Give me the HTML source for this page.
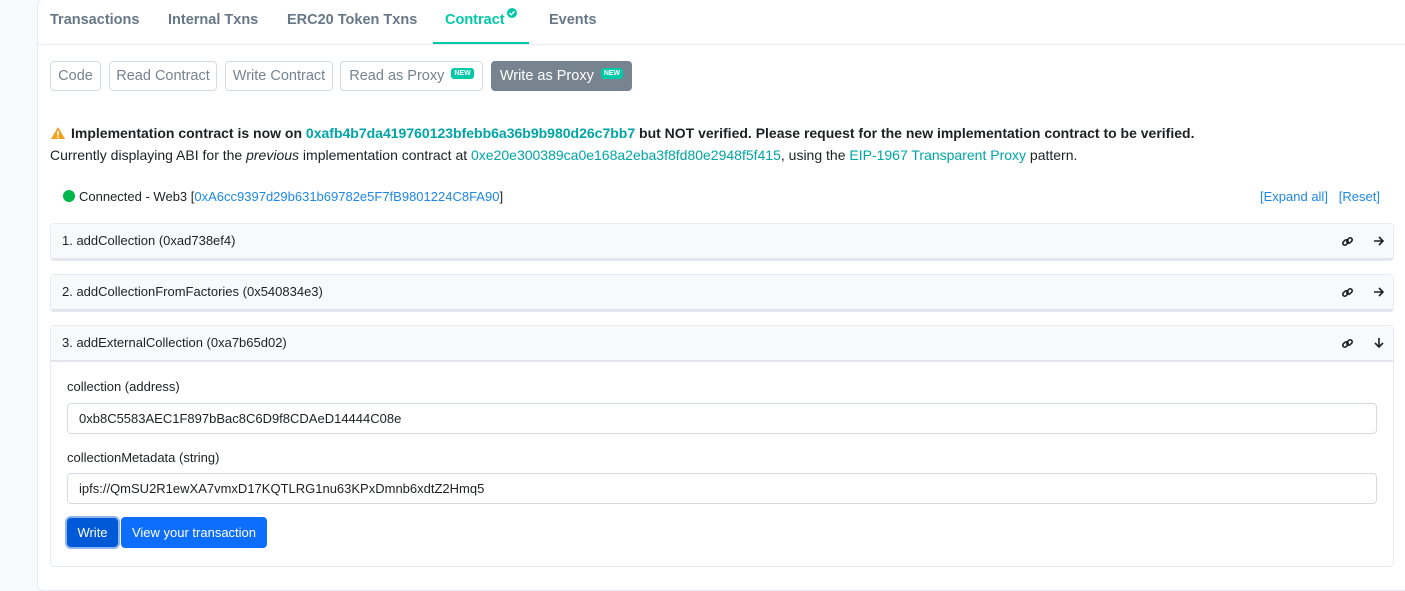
<!DOCTYPE html><html><head><style>
body{margin:0;width:1405px;height:571px;overflow:hidden;background:#f8f9fa;font-family:"Liberation Sans",sans-serif;font-size:14px;color:#1e2022}
.card{position:absolute;left:37px;top:-1px;width:1380px;height:590px;background:#fff;border:1px solid #e7eaf3;border-radius:6px}
.tabs{position:absolute;left:0;top:0;width:100%;height:44px;border-bottom:1px solid #e7eaf3}
.tab{position:absolute;top:12px;font-weight:bold;color:#677788;font-size:14.5px}
.btn{position:absolute;top:61px;height:30px;box-sizing:border-box;border:1px solid #d5dae2;border-radius:4px;color:#77838f;font-size:14.5px;line-height:28px;text-align:center;white-space:nowrap}
.new{display:inline-block;background:#00c9a7;color:#fff;font-size:7px;font-weight:bold;border-radius:3px;padding:1px 3px;vertical-align:5px;margin-left:7px;line-height:9px}
a{color:#00a5a5;text-decoration:none}
.blue{color:#1e88e5}
.acc{position:absolute;left:12px;width:1342px;border:1px solid #e7eaf3;border-radius:4px;background:#fff}
.hd{height:34px;background:#f8f9fa;border-bottom:2px solid #e2e5ec;font-size:13px;line-height:34px;padding-left:11px;color:#1e2022;position:relative}
.ic{position:absolute;top:11px}
.lbl{position:absolute;left:16px;font-size:13px}
.inp{position:absolute;left:16px;width:1310px;height:31px;box-sizing:border-box;border:1px solid #d5dae2;border-radius:4px;font-size:13px;line-height:29px;padding-left:11px;color:#1e2022}
</style></head><body>
<div class="card">
<div class="tabs">
<span class="tab" style="left:12px">Transactions</span>
<span class="tab" style="left:130px">Internal Txns</span>
<span class="tab" style="left:249px">ERC20 Token Txns</span>
<span class="tab" style="left:407px;color:#00c9a7">Contract<svg width="10" height="10" style="position:relative;top:-6px;left:2px"><circle cx="5" cy="5" r="5" fill="#00c9a7"/><path d="M2.5 5l1.7 1.7 3.3-3.3" stroke="#fff" stroke-width="1.4" fill="none"/></svg></span>
<span class="tab" style="left:511px">Events</span>
<div style="position:absolute;left:395px;top:42px;width:96px;height:2px;background:#00c9a7"></div>
</div>
<span class="btn" style="left:12px;width:51px">Code</span>
<span class="btn" style="left:71px;width:108px">Read Contract</span>
<span class="btn" style="left:187px;width:108px">Write Contract</span>
<span class="btn" style="left:302px;width:143px">Read as Proxy<span class="new">NEW</span></span>
<span class="btn" style="left:453px;width:141px;background:#77838f;border-color:#77838f;color:#fff">Write as Proxy<span class="new">NEW</span></span>
<div style="position:absolute;left:12px;top:125px;font-weight:bold;font-size:14px"><svg width="16" height="14" style="vertical-align:-2px;margin-right:5px"><path d="M8 1L15 13H1Z" fill="#f0a01c"/><rect x="7.2" y="5" width="1.6" height="4.5" fill="#fff"/><rect x="7.2" y="10.5" width="1.6" height="1.6" fill="#fff"/></svg>Implementation contract is now on <a>0xafb4b7da419760123bfebb6a36b9b980d26c7bb7</a> but NOT verified. Please request for the new implementation contract to be verified.</div>
<div style="position:absolute;left:12px;top:147px">Currently displaying ABI for the <i>previous</i> implementation contract at <a>0xe20e300389ca0e168a2eba3f8fd80e2948f5f415</a>, using the <a>EIP-1967 Transparent Proxy</a> pattern.</div>
<div style="position:absolute;left:25px;top:189px;font-size:13px"><span style="display:inline-block;width:12px;height:12px;border-radius:50%;background:#00b74a;vertical-align:-1px;margin-right:4px"></span>Connected - Web3 [<span class="blue">0xA6cc9397d29b631b69782e5F7fB9801224C8FA90</span>]</div>
<div style="position:absolute;left:1222px;top:189px;font-size:13px" class="blue">[Expand all] &nbsp; [Reset]</div>
<div class="acc" style="top:223px"><div class="hd">1. addCollection (0xad738ef4)<svg class="ic" style="left:1290px" width="13" height="13" viewBox="0 0 13 13"><g fill="none" stroke="#1e2022" stroke-width="1.6"><rect x="1.5" y="5.5" width="6" height="4" rx="2" transform="rotate(-45 4.5 7.5)"/><rect x="5.5" y="3.5" width="6" height="4" rx="2" transform="rotate(-45 8.5 5.5)"/></g></svg><svg class="ic" style="left:1322px" width="12" height="12" viewBox="0 0 12 12"><path d="M1 6h9M6 2l4 4-4 4" stroke="#1e2022" stroke-width="1.6" fill="none"/></svg></div></div>
<div class="acc" style="top:274px"><div class="hd">2. addCollectionFromFactories (0x540834e3)<svg class="ic" style="left:1290px" width="13" height="13" viewBox="0 0 13 13"><g fill="none" stroke="#1e2022" stroke-width="1.6"><rect x="1.5" y="5.5" width="6" height="4" rx="2" transform="rotate(-45 4.5 7.5)"/><rect x="5.5" y="3.5" width="6" height="4" rx="2" transform="rotate(-45 8.5 5.5)"/></g></svg><svg class="ic" style="left:1322px" width="12" height="12" viewBox="0 0 12 12"><path d="M1 6h9M6 2l4 4-4 4" stroke="#1e2022" stroke-width="1.6" fill="none"/></svg></div></div>
<div class="acc" style="top:325px;height:240px"><div class="hd">3. addExternalCollection (0xa7b65d02)<svg class="ic" style="left:1290px" width="13" height="13" viewBox="0 0 13 13"><g fill="none" stroke="#1e2022" stroke-width="1.6"><rect x="1.5" y="5.5" width="6" height="4" rx="2" transform="rotate(-45 4.5 7.5)"/><rect x="5.5" y="3.5" width="6" height="4" rx="2" transform="rotate(-45 8.5 5.5)"/></g></svg><svg class="ic" style="left:1322px" width="12" height="12" viewBox="0 0 12 12"><path d="M6 1v9M2 6l4 4 4-4" stroke="#1e2022" stroke-width="1.6" fill="none"/></svg></div>
<div class="lbl" style="top:53px">collection (address)</div>
<div class="inp" style="top:77px">0xb8C5583AEC1F897bBac8C6D9f8CDAeD14444C08e</div>
<div class="lbl" style="top:124px">collectionMetadata (string)</div>
<div class="inp" style="top:147px">ipfs://QmSU2R1ewXA7vmxD17KQTLRG1nu63KPxDmnb6xdtZ2Hmq5</div>
<div style="position:absolute;left:16px;top:192px;width:51px;height:29px;background:#0059d6;border-radius:4px;box-shadow:0 0 0 2px #8fb4ee;color:#fff;font-size:13px;line-height:29px;text-align:center">Write</div>
<div style="position:absolute;left:70px;top:191px;width:146px;height:31px;background:#0d6efd;border-radius:4px;color:#fff;font-size:13px;line-height:31px;text-align:center">View your transaction</div>
</div>
</div>
</body></html>
